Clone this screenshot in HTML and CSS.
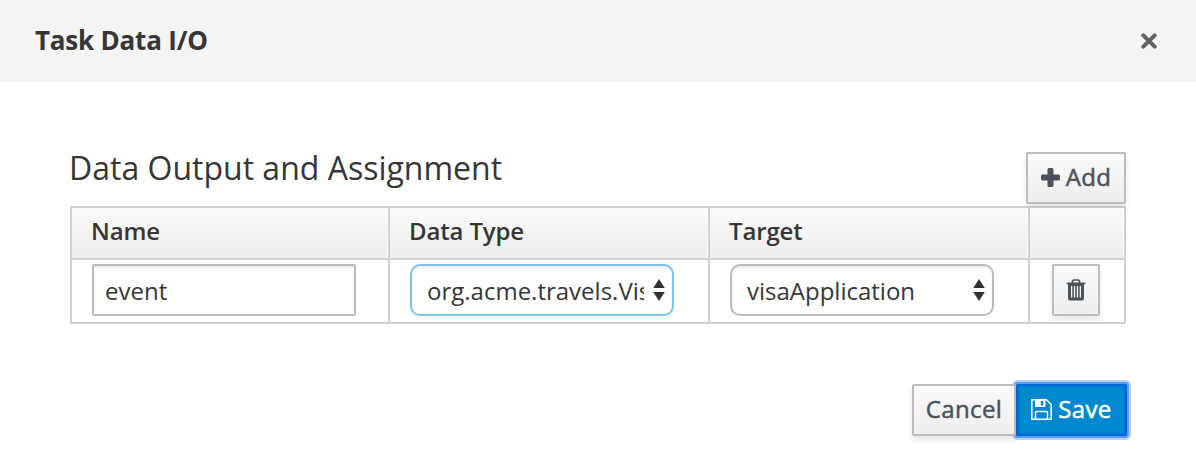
FILE: index.html
```html
<!DOCTYPE html>
<html lang="en">
<head>
<meta charset="utf-8">
<title>Task Data I/O</title>
<link rel="stylesheet" href="styles.css">
</head>
<body>
<header class="header">
  <h1 class="title">Task Data I/O</h1>
  <button class="close" aria-label="Close"><svg width="16" height="16" viewBox="0 0 16 16"><path d="M2.3 2.3L13.7 13.7M13.7 2.3L2.3 13.7" stroke="#636363" stroke-width="4" stroke-linecap="round"/></svg></button>
</header>
<main class="body">
  <div class="bar">
    <h2 class="heading">Data Output and Assignment</h2>
    <button class="btn add"><svg width="19" height="19" viewBox="0 0 19 19"><path d="M8 0h3q1.500 0 1.500 1.500v5h5q1.500 0 1.500 1.500v3q0 1.500-1.500 1.500h-5v5q0 1.500-1.500 1.500h-3q-1.500 0-1.500-1.500v-5h-5q-1.500 0-1.500-1.500v-3q0-1.500 1.500-1.500h5v-5q0-1.500 1.500-1.500z" fill="#4d5258"/></svg><span class="label">Add</span></button>
  </div>
  <div class="table">
    <div class="th">Name</div>
    <div class="th">Data Type</div>
    <div class="th">Target</div>
    <div class="th"></div>
    <div class="td"><div class="field">event</div></div>
    <div class="td"><div class="field select focus"><span class="value">org.acme.travels.Vis</span><svg class="arrows" width="12" height="22" viewBox="0 0 12 22"><path d="M6 0l5.800 9H.2zM.2 13h11.600L6 22z" fill="#333"/></svg></div></div>
    <div class="td"><div class="field select"><span class="value">visaApplication</span><svg class="arrows" width="12" height="22" viewBox="0 0 12 22"><path d="M6 0l5.800 9H.2zM.2 13h11.600L6 22z" fill="#333"/></svg></div></div>
    <div class="td"><button class="btn trash" aria-label="Delete"><svg width="20" height="22" viewBox="0 0 20 22"><path d="M6.500 4V2.300Q6.500 1 8 1h4q1.500 0 1.500 1.300V4" fill="none" stroke="#4d5258" stroke-width="1.700"/><path fill-rule="evenodd" d="M.7 3.500h18.600v1.700H18V19q0 2.500-2.500 2.500h-11Q2 21.500 2 19V5.200H.7zM5 7v11.500h1.300V7zm2.900 0v11.500h1.300V7zm2.900 0v11.500h1.300V7zm2.900 0v11.500H15V7z" fill="#4d5258"/></svg></button></div>
  </div>
  <div class="actions">
    <button class="btn cancel"><span class="label">Cancel</span></button>
    <button class="btn save"><svg width="21" height="21" viewBox="0 0 21 21"><path d="M.8.8H15.500L20.200 5.500V20.200H.8z" fill="none" stroke="#fff" stroke-width="1.600" stroke-linejoin="round"/><path d="M4.500 20v-6.500q0-1 1-1h10q1 0 1 1V20" fill="none" stroke="#fff" stroke-width="1.500"/><path fill-rule="evenodd" d="M4 .8h10.500V7q0 1-1 1H5Q4 8 4 7zm5.800 1.200v4.500h2.400V2z" fill="#fff"/></svg><span class="label">Save</span></button>
  </div>
</main>
</body>
</html>
```
FILE: styles.css
```css
* { box-sizing: border-box; }
body {
  margin: 0;
  min-height: 464px;
  background: #fff;
  color: #363636;
  font: 24px/36px "Open Sans", sans-serif;
}
svg { display: block; flex: none; }
.header {
  height: 82px;
  padding: 0 39px 0 35px;
  background: #f4f4f4;
  display: flex;
  align-items: center;
  justify-content: space-between;
}
.title { margin: 0; padding-bottom: 2px; font-size: 26px; line-height: 36px; font-weight: 700; letter-spacing: -.2px; }
.close { padding: 0; border: 0; background: none; }
.body { padding: 70px 70px 28px; }
.bar { display: flex; justify-content: space-between; height: 54px; }
.heading { margin: 0 0 0 -1px; font-size: 32px; line-height: 32px; font-weight: 400; white-space: nowrap; }
.btn {
  height: 52px;
  padding: 0 0 2px;
  display: flex;
  align-items: center;
  justify-content: center;
  border: 2px solid #bbb;
  border-radius: 2px;
  background: linear-gradient(#fafafa, #ededed) border-box;
  box-shadow: 0 4px 6px rgba(3, 3, 3, .1);
  color: #4d5258;
  font: 400 24px/36px "Open Sans", sans-serif;
  -webkit-text-stroke: .5px currentColor;
  letter-spacing: .35px;
  white-space: nowrap;
}
.label { display: block; }
.add { width: 100px; gap: 6px; }
.table {
  display: grid;
  grid-template-columns: 316px 318px 318px 94px;
  grid-template-rows: 50px 62px;
  gap: 2px;
  padding: 2px;
  background: #d1d1d1;
}
.th {
  padding: 5px 19px;
  border-right: 1px solid #fff;
  background: linear-gradient(#fafafa, #ededed);
  font-weight: 600;
  letter-spacing: -.15px;
}
.td { padding: 4px 20px; background: #fff; }
.field {
  width: 264px;
  height: 52px;
  padding: 7px 11px;
  border: 2px solid #bbb;
  border-radius: 2px;
  background: #fff;
  box-shadow: inset 0 2px 2px rgba(3, 3, 3, .075);
}
.select {
  display: flex;
  align-items: center;
  justify-content: space-between;
  padding: 0 7px 0 15px;
  border-radius: 10px;
}
.focus { border-color: #7dc3e8; }
.value { width: 217px; overflow: hidden; white-space: nowrap; padding-top: 2px; }
.trash { width: 48px; margin-left: 2px; padding: 0 0 1px; }
.actions { display: flex; justify-content: flex-end; margin-top: 60px; }
.cancel { position: relative; z-index: 1; width: 104px; }
.save {
  width: 111px;
  margin-right: -1px;
  gap: 6px;
  border-color: #0069da;
  background: #0088ce;
  box-shadow: inset 0 0 3px #0069da, 0 0 0 2px #5c9cf2, 0 0 0 4px #b7d2fa;
  color: #fff;
}
```
